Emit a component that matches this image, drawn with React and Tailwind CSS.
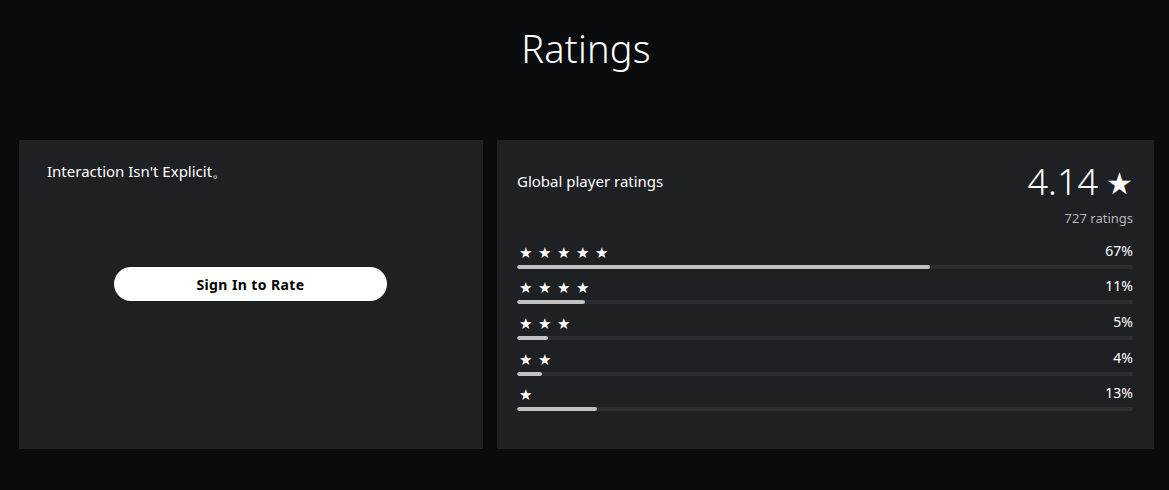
import React from "react";

const rows = [
  { stars: 5, pct: 67 },
  { stars: 4, pct: 11 },
  { stars: 3, pct: 5 },
  { stars: 2, pct: 4 },
  { stars: 1, pct: 13 },
];

function Stars({ n }) {
  return (
    <div className="flex gap-[6px] text-[15px] leading-none text-white pl-[2px]">
      {Array.from({ length: n }).map((_, i) => (
        <span key={i}>★</span>
      ))}
    </div>
  );
}

export default function App() {
  return (
    <div
      className="w-[1169px] h-[490px] bg-[#0a0b0c] text-white flex flex-col"
      style={{ fontFamily: '"Noto Sans", "Open Sans", sans-serif' }}
    >
      <h1 className="h-[140px] pt-[24px] text-center text-[38px] font-light leading-[48px] tracking-[0.2px] pl-[3px]">
        Ratings
      </h1>
      <div className="flex gap-[14px] pl-[19px] pr-[15px]">
        <div className="w-[464px] h-[309px] bg-[#1f2024] px-[28px] pt-[20px] flex flex-col">
          <p className="text-[15px] leading-[22px]">Interaction Isn't Explicit。</p>
          <div className="flex justify-center mt-[85px] pr-[1px]">
            <button className="w-[273px] h-[34px] rounded-full bg-white text-black text-[14px] font-bold tracking-[0.4px]">
              Sign In to Rate
            </button>
          </div>
        </div>
        <div className="flex-1 h-[309px] bg-[#1f2024] pl-[20px] pr-[21px] pt-[20px] flex flex-col">
          <div className="flex items-center justify-between h-[44px]">
            <span className="text-[15px] leading-[22px] -mt-[2px]">Global player ratings</span>
            <span className="flex items-center gap-[8px]">
              <span className="text-[36px] font-light leading-none">4.14</span>
              <span className="text-[30px] leading-none mt-[2px]">★</span>
            </span>
          </div>
          <div className="text-right text-[13px] text-[#b4b5b8] leading-[18px] mt-[5px]">727 ratings</div>
          <div className="flex flex-col mt-[9px]">
            {rows.map((r) => (
              <div key={r.stars} className="h-[35.7px] flex flex-col justify-end pb-[3px]">
                <div className="flex items-end justify-between">
                  <Stars n={r.stars} />
                  <span className="text-[14px] leading-[18px]">{r.pct}%</span>
                </div>
                <div className="mt-[5px] h-[4px] bg-[#2d2e33] rounded-full overflow-hidden">
                  <div className="h-full bg-[#c2c2c2] rounded-full" style={{ width: `${r.pct}%` }} />
                </div>
              </div>
            ))}
          </div>
        </div>
      </div>
    </div>
  );
}
